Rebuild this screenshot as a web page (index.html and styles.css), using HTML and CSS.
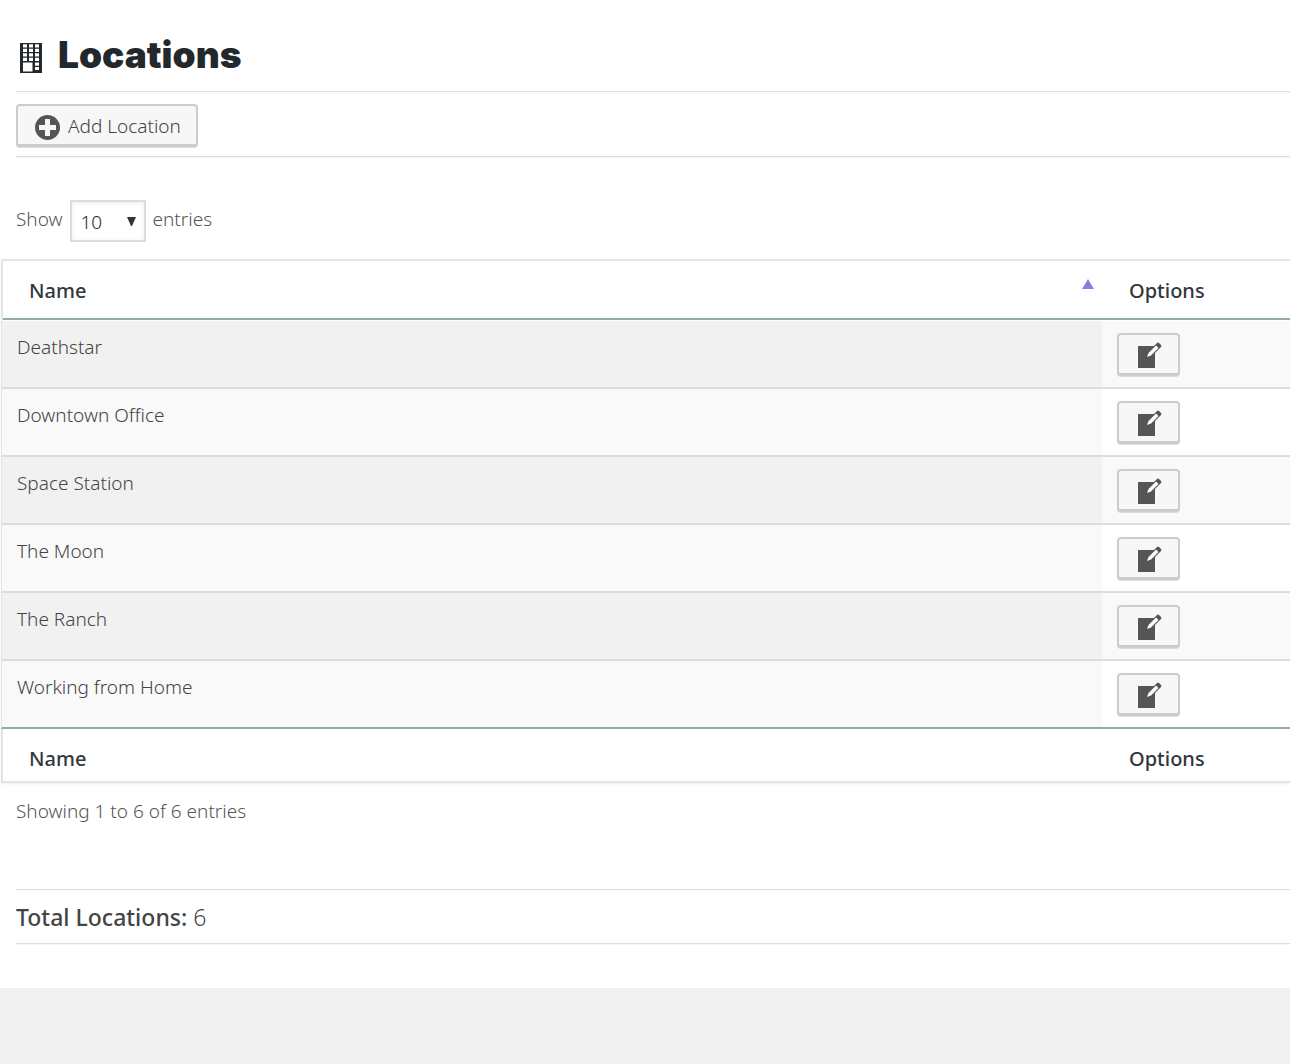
FILE: index.html
```html
<!DOCTYPE html>
<html lang="en">
<head>
<meta charset="utf-8">
<meta name="viewport" content="width=device-width, initial-scale=1">
<title>Locations</title>
<link rel="stylesheet" href="styles.css">
</head>
<body>
<svg class="sprite" aria-hidden="true">
  <symbol id="edit" viewBox="0 0 26 28">
    <path fill="#555" d="M2 5h17v22H2z"/>
    <path fill="#555" d="M11 16l1-5 9-9q1-1 2 0l2 2q1 1 0 2l-9 9z"/>
    <path fill="#fff" d="M11 16l1.500-4L20 4.500 22.500 7 15 14.500z"/>
  </symbol>
</svg>
<main class="page">
  <header class="title">
    <svg class="title-icon" width="22" height="30" viewBox="0 0 22 30" aria-hidden="true">
      <path fill="#23282d" fill-rule="evenodd" d="M0 0h22v30H0zM3 1.300v3.200h4V1.300zM9 1.300v3.200h4V1.300zM15 1.300v3.200h4V1.300zM3 5.800V9h4V5.800zM9 5.800V9h4V5.800zM15 5.800V9h4V5.800zM3 10.300v3.200h4v-3.200zM9 10.300v3.200h4v-3.200zM15 10.300v3.200h4v-3.200zM3 14.800V18h4v-3.200zM9 14.800V18h4v-3.200zM15 14.800V18h4v-3.200zM3 19.500v9h9.500v-9zM15 19.500v3.200h4v-3.200zM15 24v3h4v-3z"/>
    </svg>
    <h1>Locations</h1>
  </header>
  <div class="toolbar">
    <button class="button" type="button">
      <svg width="25" height="25" viewBox="0 0 25 25" aria-hidden="true"><circle cx="12.500" cy="12.500" r="12.500" fill="#555"/><path fill="#f7f7f7" d="M10 4h5v6h6v5h-6v6h-5v-6H4v-5h6z"/></svg>
      <span>Add Location</span>
    </button>
  </div>
  <div class="length">
    <label for="length">Show</label>
    <span class="select-wrap">
      <select id="length"><option>10</option><option>25</option><option>50</option></select>
      <svg class="caret" width="9" height="9" viewBox="0 0 9 9" aria-hidden="true"><path fill="#32373c" d="M0 0h9L5 9H4z"/></svg>
    </span>
    <span>entries</span>
  </div>
  <table class="locations">
    <thead>
      <tr>
        <th scope="col" aria-sort="ascending"><div class="sortable">Name <svg width="12" height="10" viewBox="0 0 12 10" aria-hidden="true"><path fill="#8080e0" d="M6 0l6 10H0z"/></svg></div></th>
        <th scope="col" class="options">Options</th>
      </tr>
    </thead>
    <tbody>
      <tr><td>Deathstar</td><td><button class="button edit" type="button" aria-label="Edit"><svg width="26" height="28"><use href="#edit"/></svg></button></td></tr>
      <tr><td>Downtown Office</td><td><button class="button edit" type="button" aria-label="Edit"><svg width="26" height="28"><use href="#edit"/></svg></button></td></tr>
      <tr><td>Space Station</td><td><button class="button edit" type="button" aria-label="Edit"><svg width="26" height="28"><use href="#edit"/></svg></button></td></tr>
      <tr><td>The Moon</td><td><button class="button edit" type="button" aria-label="Edit"><svg width="26" height="28"><use href="#edit"/></svg></button></td></tr>
      <tr><td>The Ranch</td><td><button class="button edit" type="button" aria-label="Edit"><svg width="26" height="28"><use href="#edit"/></svg></button></td></tr>
      <tr><td>Working from Home</td><td><button class="button edit" type="button" aria-label="Edit"><svg width="26" height="28"><use href="#edit"/></svg></button></td></tr>
    </tbody>
    <tfoot>
      <tr><th scope="col">Name</th><th scope="col">Options</th></tr>
    </tfoot>
  </table>
  <p class="info">Showing 1 to 6 of 6 entries</p>
  <p class="total"><strong>Total Locations:</strong> 6</p>
</main>
</body>
</html>
```

FILE: styles.css
```css
* { box-sizing: border-box; }
body {
  margin: 0;
  background: #f0f0f0;
  color: #444;
  font: 300 19px/28px "Noto Sans", "Open Sans", sans-serif;
}
.sprite { display: none; }
.page { background: #fff; padding: 30px 0 44px; }
.title {
  display: flex;
  align-items: center;
  gap: 16px;
  height: 62px;
  margin-left: 16px;
  padding: 0 0 12px 4px;
  border-bottom: 1px solid #ddd;
}
.title-icon { margin-top: 6px; }
h1 {
  margin: 0;
  color: #23282d;
  font: 900 37px/48px Inter, sans-serif;
}
.toolbar {
  margin-left: 16px;
  padding: 12px 0 9px;
  border-bottom: 1px solid #ddd;
  box-shadow: 0 1px 1px #f5f5f5, inset 0 1px 1px #f5f5f5;
}
.button {
  display: flex;
  align-items: center;
  height: 43px;
  padding: 0 15px 0 17px;
  gap: 8px;
  border: 2px solid #ccc;
  border-bottom-width: 3px;
  border-radius: 4px;
  background: #f7f7f7;
  box-shadow: 0 1px 0 #ddd;
  color: #444;
  font: inherit;
  white-space: nowrap;
}
.toolbar svg { margin-top: 5px; }
.toolbar span { padding-top: 2px; }
.length {
  display: flex;
  align-items: center;
  gap: 7px;
  margin: 43px 0 17px 16px;
  color: #555;
}
.length > label, .length > span:last-child { padding-bottom: 4px; }
.select-wrap { position: relative; display: flex; }
select {
  appearance: none;
  width: 76px;
  height: 42px;
  margin: 0;
  padding: 2px 9px 0;
  border: 2px solid #ddd;
  border-radius: 0;
  background: #fff;
  box-shadow: inset 0 1px 4px rgba(0, 0, 0, .08);
  color: #23282d;
  font: inherit;
}
.caret { position: absolute; right: 10px; top: 17px; pointer-events: none; }
.locations {
  width: calc(100% - 1px);
  margin-left: 1px;
  border-spacing: 0;
  table-layout: fixed;
  box-shadow: 0 1px 2px #eee;
}
th {
  padding: 0 8px 0 27px;
  color: #32373c;
  font-size: 20px;
  font-weight: 500;
  text-align: left;
}
th:first-child { padding-left: 26px; border-left: 2px solid #e4e4e4; }
thead th { height: 62px; border-top: 2px solid #e4e4e4; border-bottom: 1px solid #fff; box-shadow: inset 0 -2px #95a9a7; }
.options { width: 188px; }
.sortable { display: flex; justify-content: space-between; }
.sortable svg { margin-top: 2px; }
td {
  height: 68px;
  padding: 12px 15px 0;
  border-bottom: 2px solid #ddd;
  vertical-align: top;
}
td:first-child { border-left: 1px solid #e4e4e4; background: #f9f9f9; }
tbody tr:nth-child(odd) { background: #f9f9f9; }
tbody tr:nth-child(odd) td:first-child { background: #f1f1f1; }
tbody tr:last-child td { border-bottom-color: #95a9a7; }
.edit { padding: 0 16px 0 17px; }
.edit svg { margin-top: 1px; }
tfoot th { height: 54px; padding-top: 8px; border-bottom: 2px solid #e4e4e4; }
.info { margin: 14px 16px 64px; color: #555; }
.total {
  margin: 0 0 0 16px;
  padding: 13px 0 11px;
  border: solid #ddd;
  border-width: 1px 0;
  box-shadow: 0 1px 1px #f5f5f5;
  color: #444;
  font-size: 23px;
  line-height: 29px;
}
.total strong { font-weight: 500; }
```
